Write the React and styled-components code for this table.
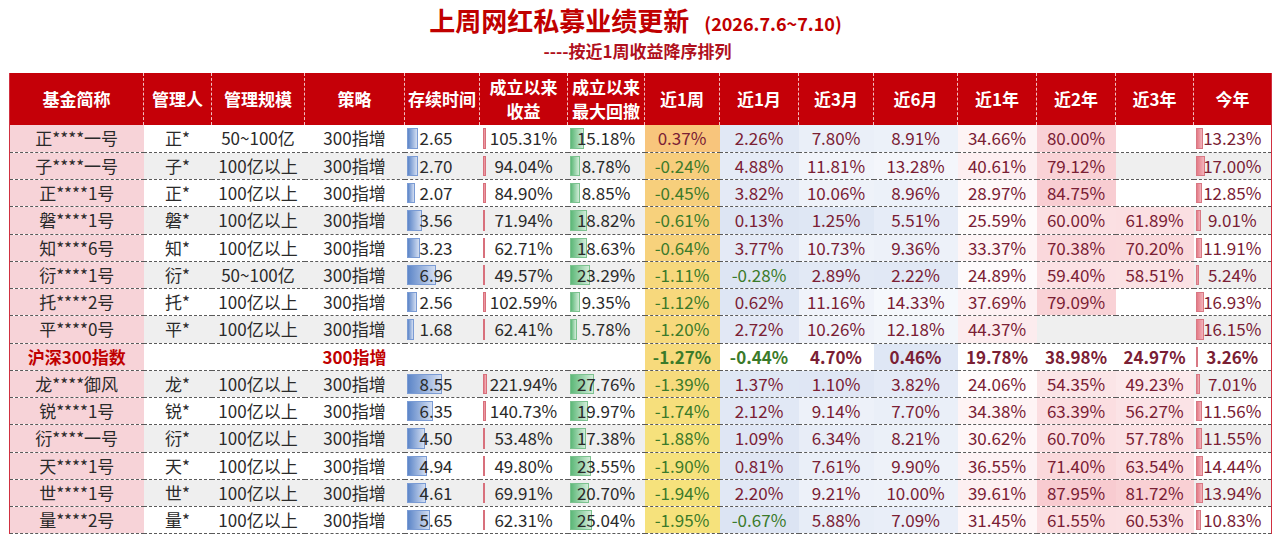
import styled, { createGlobalStyle } from 'styled-components';

const GlobalStyle = createGlobalStyle`
  body {
    margin: 0;
    background: #fff;
    font-family: "Noto Sans CJK SC", "Noto Sans", sans-serif;
  }
`

const Page = styled.div`
  width: 1280px;
  height: 541px;
  overflow: hidden;
  padding-left: 9px;
  box-sizing: border-box;
`

const TitleBlock = styled.div`
  height: 73px;
  display: flex;
  flex-direction: column;
  align-items: center;
  padding-top: 3px;
  box-sizing: border-box;
`

const TitleLine = styled.div`
  display: flex;
  align-items: baseline;
  gap: 15px;
  color: #c00000;
  font-weight: 700;
  line-height: 33px;
  margin-right: 18px;
`

const MainTitle = styled.span`
  font-size: 26px;
`

const DateRange = styled.span`
  font-size: 18px;
`

const SubTitle = styled.div`
  font-size: 17px;
  font-weight: 700;
  color: #b0101c;
  line-height: 22px;
  margin-right: 14px;
`

const Table = styled.table`
  width: 1262px;
  border-collapse: collapse;
  table-layout: fixed;
  border-left: 1px solid #d03040;
  border-right: 1px solid #d03040;
`

const HeadCell = styled.th`
  height: 52px;
  padding: 0;
  background: #c50008;
  color: #fff;
  font-size: 17px;
  font-weight: 700;
  line-height: 24px;
  text-align: center;
  border-left: 1px dashed rgba(255, 255, 255, 0.75);
  &:first-child {
    border-left: none;
  }
`

const Row = styled.tr`
  height: 27.25px;
  background: ${(p) => (p.$shaded ? '#efefef' : '#fff')};
  border-bottom: 1px dashed #5a5a5a;
`

const Cell = styled.td`
  position: relative;
  padding: 0;
  font-size: 17px;
  line-height: 26px;
  text-align: ${(p) => p.$align || 'center'};
  padding-left: ${(p) => p.$indent || 0}px;
  color: ${(p) => p.$color || '#2a2a2a'};
  font-weight: ${(p) => (p.$bold ? 700 : 400)};
  white-space: nowrap;
  overflow: hidden;
`

const NameCell = styled(Cell)`
  background: #f7d3d8;
`

const CellText = styled.span`
  position: relative;
`

const Bar = styled.span`
  position: absolute;
  left: ${(p) => p.$left}px;
  top: 3px;
  bottom: 3px;
  box-sizing: border-box;
  border: 1px solid ${(p) => p.$edge};
  background: linear-gradient(to right, ${(p) => p.$from}, ${(p) => p.$to});
`

const columns = [
  { title: '基金简称', width: 134 },
  { title: '管理人', width: 68 },
  { title: '管理规模', width: 93 },
  { title: '策略', width: 100 },
  { title: '存续时间', width: 75 },
  { title: ['成立以来', '收益'], width: 88 },
  { title: ['成立以来', '最大回撤'], width: 77 },
  { title: '近1周', width: 75 },
  { title: '近1月', width: 79 },
  { title: '近3月', width: 75 },
  { title: '近6月', width: 84 },
  { title: '近1年', width: 79 },
  { title: '近2年', width: 79 },
  { title: '近3年', width: 78 },
  { title: '今年', width: 78 },
]

const funds = [
  ['正****一号', '正*', '50~100亿', '300指增', 2.65, 105.31, 15.18, 0.37, 2.26, 7.8, 8.91, 34.66, 80.0, null, 13.23],
  ['子****一号', '子*', '100亿以上', '300指增', 2.7, 94.04, 8.78, -0.24, 4.88, 11.81, 13.28, 40.61, 79.12, null, 17.0],
  ['正****1号', '正*', '100亿以上', '300指增', 2.07, 84.9, 8.85, -0.45, 3.82, 10.06, 8.96, 28.97, 84.75, null, 12.85],
  ['磐****1号', '磐*', '100亿以上', '300指增', 3.56, 71.94, 18.82, -0.61, 0.13, 1.25, 5.51, 25.59, 60.0, 61.89, 9.01],
  ['知****6号', '知*', '100亿以上', '300指增', 3.23, 62.71, 18.63, -0.64, 3.77, 10.73, 9.36, 33.37, 70.38, 70.2, 11.91],
  ['衍****1号', '衍*', '50~100亿', '300指增', 6.96, 49.57, 23.29, -1.11, -0.28, 2.89, 2.22, 24.89, 59.4, 58.51, 5.24],
  ['托****2号', '托*', '100亿以上', '300指增', 2.56, 102.59, 9.35, -1.12, 0.62, 11.16, 14.33, 37.69, 79.09, null, 16.93],
  ['平****0号', '平*', '100亿以上', '300指增', 1.68, 62.41, 5.78, -1.2, 2.72, 10.26, 12.18, 44.37, null, null, 16.15],
  ['沪深300指数', '', '', '300指增', null, null, null, -1.27, -0.44, 4.7, 0.46, 19.78, 38.98, 24.97, 3.26],
  ['龙****御风', '龙*', '100亿以上', '300指增', 8.55, 221.94, 27.76, -1.39, 1.37, 1.1, 3.82, 24.06, 54.35, 49.23, 7.01],
  ['锐****1号', '锐*', '100亿以上', '300指增', 6.35, 140.73, 19.97, -1.74, 2.12, 9.14, 7.7, 34.38, 63.39, 56.27, 11.56],
  ['衍****一号', '衍*', '100亿以上', '300指增', 4.5, 53.48, 17.38, -1.88, 1.09, 6.34, 8.21, 30.62, 60.7, 57.78, 11.55],
  ['天****1号', '天*', '100亿以上', '300指增', 4.94, 49.8, 23.55, -1.9, 0.81, 7.61, 9.9, 36.55, 71.4, 63.54, 14.44],
  ['世****1号', '世*', '100亿以上', '300指增', 4.61, 69.91, 20.7, -1.94, 2.2, 9.21, 10.0, 39.61, 87.95, 81.72, 13.94],
  ['量****2号', '量*', '100亿以上', '300指增', 5.65, 62.31, 25.04, -1.95, -0.67, 5.88, 7.09, 31.45, 61.55, 60.53, 10.83],
]

const INDEX_ROW = 8
const RED = '#c00000'
const UP = '#7a2034'
const DOWN = '#3b7a2a'

const mix = (a, b, t) => {
  const ca = a.match(/\w\w/g).map((h) => parseInt(h, 16))
  const cb = b.match(/\w\w/g).map((h) => parseInt(h, 16))
  const c = ca.map((v, i) => Math.round(v + (cb[i] - v) * Math.max(0, Math.min(1, t))))
  return `rgb(${c.join(',')})`
}

// 近1周: yellow (low) -> orange (high)
const weekColor = (v) => mix('f6e27c', 'f8c57c', (v + 1.95) / 2.32)

// 近1月 ~ 近3年: pale blue - white - pink
const heatColor = (v) =>
  v < 20 ? mix('dce4f3', 'ffffff', (v + 0.67) / 20.67) : mix('ffffff', 'f8cbd0', (v - 20) / 68)

const pct = (v) => `${v.toFixed(2)}%`

function BarCell({ value, bar, text, color, bold }) {
  if (value == null) return <Cell />
  return (
    <Cell $align={bar.align} $indent={bar.indent} $color={color} $bold={bold}>
      <Bar
        $left={bar.left}
        $edge={bar.edge}
        $from={bar.from}
        $to={bar.to}
        style={{ width: bar.size(value) }}
      />
      <CellText>{text(value)}</CellText>
    </Cell>
  )
}

const durationBar = {
  left: 2, edge: '#7a9bd4', from: '#5d86c8', to: '#d3def2', align: 'left', indent: 15,
  size: (v) => Math.round(v * 4.1),
}
const returnBar = {
  left: 3, edge: '#d8707c', from: '#e47682', to: '#f3b9c0',
  size: (v) => Math.max(2, Math.round(1.5 + v * 0.013)),
}
const drawdownBar = {
  left: 2, edge: '#7cc28f', from: '#5db878', to: '#d2ecd9',
  size: (v) => Math.round(3 + v * 0.75),
}
const ytdBar = {
  left: 2, edge: '#d87884', from: '#e47a86', to: '#f2b3bb',
  size: (v) => Math.max(2, Math.round(v * 0.5)),
}

function PerfCell({ value, bg, bold }) {
  if (value == null) return <Cell />
  return (
    <Cell $color={value < 0 ? DOWN : UP} $bold={bold} style={bg ? { background: bg } : undefined}>
      {pct(value)}
    </Cell>
  )
}

function FundRow({ data, index }) {
  const isIndex = index === INDEX_ROW
  const [name, manager, scale, strategy, duration, total, drawdown, week, ...rest] = data
  const periods = rest.slice(0, 6)
  const ytd = rest[6]
  return (
    <Row $shaded={index % 2 === 1}>
      <NameCell $color={isIndex ? RED : undefined} $bold={isIndex}>{name}</NameCell>
      <Cell>{manager}</Cell>
      <Cell>{scale}</Cell>
      <Cell $color={isIndex ? RED : undefined} $bold={isIndex}>{strategy}</Cell>
      <BarCell value={duration} bar={durationBar} text={(v) => v.toFixed(2)} />
      <BarCell value={total} bar={returnBar} text={pct} />
      <BarCell value={drawdown} bar={drawdownBar} text={pct} />
      <PerfCell value={week} bg={weekColor(week)} bold={isIndex} />
      {periods.map((v, i) => {
        let bg = v == null ? null : heatColor(v)
        if (isIndex) bg = i === 2 ? '#dfe7f5' : '#fff'
        return <PerfCell key={i} value={v} bg={bg} bold={isIndex} />
      })}
      <BarCell value={ytd} bar={ytdBar} text={pct} color={UP} bold={isIndex} />
    </Row>
  )
}

export default function App() {
  return (
    <Page>
      <GlobalStyle />
      <TitleBlock>
        <TitleLine>
          <MainTitle>上周网红私募业绩更新</MainTitle>
          <DateRange>(2026.7.6~7.10)</DateRange>
        </TitleLine>
        <SubTitle>----按近1周收益降序排列</SubTitle>
      </TitleBlock>
      <Table>
        <colgroup>
          {columns.map((c, i) => (
            <col key={i} style={{ width: c.width }} />
          ))}
        </colgroup>
        <thead>
          <tr>
            {columns.map((c, i) => (
              <HeadCell key={i}>
                {Array.isArray(c.title) ? (
                  <>
                    {c.title[0]}
                    <br />
                    {c.title[1]}
                  </>
                ) : (
                  c.title
                )}
              </HeadCell>
            ))}
          </tr>
        </thead>
        <tbody>
          {funds.map((f, i) => (
            <FundRow key={i} data={f} index={i} />
          ))}
        </tbody>
      </Table>
    </Page>
  )
}
